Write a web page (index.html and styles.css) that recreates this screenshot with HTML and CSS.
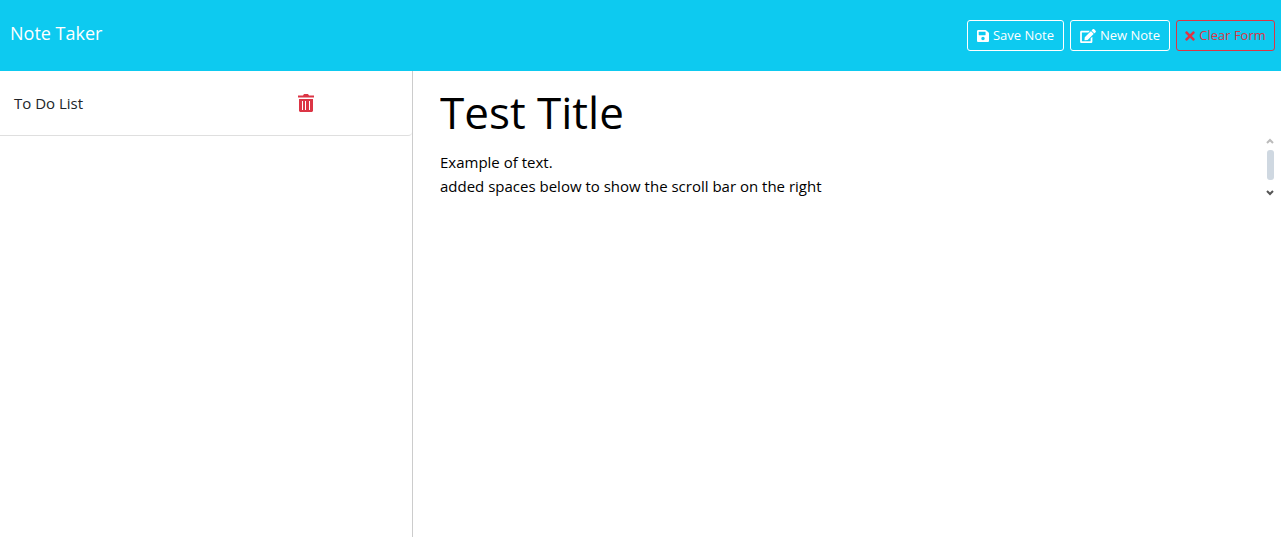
FILE: index.html
```html
<!DOCTYPE html>
<html lang="en">
<head>
<meta charset="utf-8">
<meta name="viewport" content="width=device-width, initial-scale=1">
<title>Note Taker</title>
<link rel="stylesheet" href="styles.css">
</head>
<body>
<header class="navbar">
  <a class="brand" href="#">Note Taker</a>
  <div class="actions">
    <button class="btn btn-save" type="button"><svg class="icon" viewBox="0 0 448 512" aria-hidden="true"><path d="M433.941 129.941l-83.882-83.882A48 48 0 0 0 316.118 32H48C21.49 32 0 53.49 0 80v352c0 26.51 21.49 48 48 48h352c26.51 0 48-21.49 48-48V163.882a48 48 0 0 0-14.059-33.941zM224 416c-35.346 0-64-28.654-64-64 0-35.346 28.654-64 64-64s64 28.654 64 64c0 35.346-28.654 64-64 64zm96-304.52V212c0 6.627-5.373 12-12 12H76c-6.627 0-12-5.373-12-12V108c0-6.627 5.373-12 12-12h228.52c3.183 0 6.235 1.264 8.485 3.515l3.48 3.48A11.996 11.996 0 0 1 320 111.48z"/></svg><span>Save Note</span></button>
    <button class="btn btn-new" type="button"><svg class="icon icon-wide" viewBox="0 0 576 512" aria-hidden="true"><path d="M402.6 83.2l90.2 90.2c3.8 3.8 3.8 10 0 13.8L274.4 405.6l-92.8 10.3c-12.4 1.4-22.9-9.1-21.5-21.5l10.3-92.8L388.8 83.2c3.8-3.8 10-3.8 13.8 0zm162-22.900l-48.800-48.800c-15.200-15.200-39.900-15.200-55.200 0l-35.400 35.400c-3.800 3.800-3.800 10 0 13.800l90.200 90.200c3.800 3.800 10 3.800 13.800 0l35.400-35.400c15.200-15.300 15.200-40 0-55.200zM384 346.200V448H64V128h229.800c3.200 0 6.200-1.300 8.500-3.500l40-40c7.600-7.600 2.200-20.500-8.500-20.500H48C21.500 64 0 85.500 0 112v352c0 26.500 21.500 48 48 48h352c26.500 0 48-21.500 48-48V306.200c0-10.700-12.900-16-20.500-8.500l-40 40c-2.200 2.300-3.500 5.300-3.500 8.500z"/></svg><span>New Note</span></button>
    <button class="btn btn-danger" type="button"><svg class="icon icon-narrow" viewBox="0 0 352 512" aria-hidden="true"><path d="M242.720 256l100.070-100.070c12.280-12.280 12.280-32.190 0-44.480l-22.240-22.240c-12.280-12.280-32.190-12.280-44.480 0L176 189.280 75.930 89.210c-12.280-12.280-32.190-12.280-44.480 0L9.210 111.450c-12.280 12.280-12.280 32.190 0 44.480L109.280 256 9.210 356.070c-12.280 12.280-12.280 32.190 0 44.480l22.240 22.240c12.280 12.280 32.200 12.280 44.480 0L176 322.720l100.070 100.070c12.280 12.280 32.200 12.280 44.480 0l22.240-22.240c12.280-12.280 12.280-32.190 0-44.480L242.720 256z"/></svg><span>Clear Form</span></button>
  </div>
</header>
<div class="layout">
  <aside class="sidebar">
    <ul class="notes">
      <li class="note">
        <a class="note-title" href="#">To Do List</a>
        <button class="delete" type="button" aria-label="Delete note"><svg class="trash" viewBox="0 0 16 18" aria-hidden="true"><path fill-rule="evenodd" d="M0 1.500h5l1-1.500h4l1 1.500h5v2H0zM1 5h14v12l-1 1H2l-1-1zM4 7v9h1V7zM7 7v9h1V7zM11 7v9h1V7z"/></svg></button>
      </li>
    </ul>
  </aside>
  <main class="editor">
    <input class="title-input" type="text" aria-label="Note title" value="Test Title">
    <div class="text-box">
      <textarea class="text-input" aria-label="Note text">Example of text.
added spaces below to show the scroll bar on the right

</textarea>
      <div class="scrollbar" aria-hidden="true">
        <svg class="arrow arrow-up" viewBox="0 0 8 6"><path d="M1 5l3-3 3 3"/></svg>
        <div class="thumb"></div>
        <svg class="arrow arrow-down" viewBox="0 0 8 6"><path d="M1 1l3 3 3-3"/></svg>
      </div>
    </div>
  </main>
</div>
</body>
</html>
```
FILE: styles.css
```css
* {
  box-sizing: border-box;
}

body {
  display: flex;
  flex-direction: column;
  min-height: 100vh;
  margin: 0;
  background: #fff;
  color: #212529;
  font: 15px/24px "Segoe UI", "Open Sans", sans-serif;
}

.navbar {
  display: flex;
  justify-content: space-between;
  align-items: flex-start;
  padding: 20px 6px 20px 10px;
  background: #0dcaf0;
}

.brand {
  color: #fff;
  font-size: 18px;
  line-height: 26px;
  text-decoration: none;
}

.actions {
  display: flex;
  gap: 6px;
}

.btn {
  display: flex;
  align-items: center;
  justify-content: center;
  gap: 4px;
  height: 31px;
  padding: 0;
  border: 1px solid #fff;
  border-radius: 3px;
  background: transparent;
  color: #fff;
  font: 13px/21px "Segoe UI", "Open Sans", sans-serif;
  white-space: nowrap;
}

.btn-save {
  width: 97px;
}

.btn-new {
  width: 100px;
}

.btn-danger {
  width: 99px;
  border-color: #dc3545;
  color: #dc3545;
}

.icon {
  width: 12px;
  height: 14px;
  fill: currentColor;
}

.icon-wide {
  width: 16px;
}

.icon-narrow {
  width: 10px;
}

.layout {
  display: flex;
  flex: 1;
}

.sidebar {
  width: 413px;
  flex-shrink: 0;
  border-right: 1px solid #ccc;
}

.notes {
  margin: 0;
  padding: 0;
  list-style: none;
}

.note {
  display: grid;
  grid-template-columns: 284px 1fr;
  align-items: center;
  height: 65px;
  padding-left: 14px;
  border-bottom: 1px solid #dfdfdf;
  border-bottom-right-radius: 4px;
}

.note-title {
  color: inherit;
  text-decoration: none;
}

.delete {
  justify-self: start;
  display: flex;
  padding: 0;
  border: 0;
  background: transparent;
  color: #dc3545;
}

.trash {
  width: 16px;
  height: 18px;
  fill: currentColor;
}

.editor {
  flex: 1;
  min-width: 0;
  padding: 5px 7px 0 27px;
}

.title-input,
.text-input {
  display: block;
  width: 100%;
  padding: 0;
  border: 0;
  outline: 0;
  background: transparent;
  color: #000;
  font: inherit;
}

.title-input {
  height: 72px;
  font-size: 44px;
  line-height: 72px;
}

.text-box {
  display: flex;
  padding-top: 2px;
}

.text-input {
  flex: 1;
  height: 48px;
  resize: none;
  scrollbar-width: none;
}

.scrollbar {
  display: flex;
  flex-direction: column;
  align-items: center;
  justify-content: space-between;
  width: 8px;
  margin-top: -12px;
  margin-bottom: 2px;
}

.thumb {
  width: 7px;
  height: 30px;
  margin-bottom: 5px;
  border-radius: 3px;
  background: #cfd8e1;
}

.arrow {
  width: 8px;
  height: 6px;
  fill: none;
  stroke-width: 2;
}

.arrow-up {
  stroke: #bbb;
}

.arrow-down {
  stroke: #555;
}
```
